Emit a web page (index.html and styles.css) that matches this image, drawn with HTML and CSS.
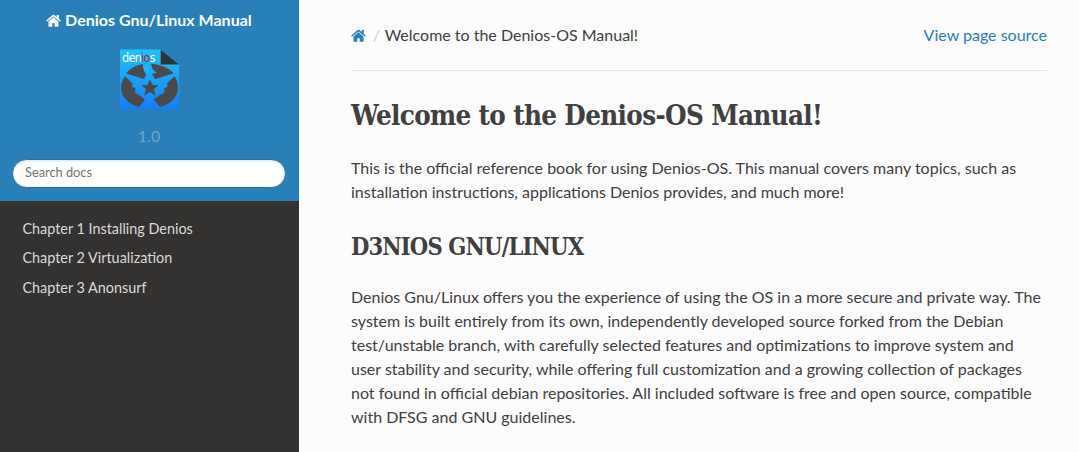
FILE: index.html
```html
<!DOCTYPE html>
<html lang="en">
<head>
<meta charset="utf-8">
<title>Welcome to the Denios-OS Manual!</title>
<link rel="stylesheet" href="styles.css">
</head>
<body>
<nav class="side">
  <div class="search-area">
    <a class="project"><svg class="home" viewBox="0 0 16 14"><path d="M8 3.6 2.6 8v5.1c0 .3.2.5.5.5h3.6V10h2.6v3.6h3.6c.3 0 .5-.2.5-.5V8zM15.8 7l-2-1.7V1.4c0-.2-.1-.3-.3-.3h-1.8c-.2 0-.3.1-.3.3v1.8L9 1.2c-.6-.5-1.4-.5-2 0L.2 7c-.2.1-.2.3 0 .4l.6.7c.1.2.3.2.4 0L8 2.6l6.8 5.5c.1.2.3.2.4 0l.6-.7c.2-.1.2-.3 0-.4z"/></svg> Denios Gnu/Linux Manual</a>
    <svg class="logo" viewBox="0 0 60 61">
      <defs><linearGradient id="sky" x2="0" y2="1"><stop stop-color="#1fc3f8"/><stop offset="1" stop-color="#167df5"/></linearGradient></defs>
      <path fill="url(#sky)" d="M0 .5h40.500l18.500 15v45H0z"/>
      <path fill="#2f3236" d="M40.700.7v14.800h18.300z"/>
      <g fill="#4a4a4a">
        <path d="M6 24.500Q13 16 23 15l1 7 2 3.500-2 4.500z"/>
        <path d="M31 14.800Q46 16 53.500 24.300L35 30.200l-3-5.500 4.800-.6-4.300-4.100z"/>
        <path d="M5 27.200l7.500 7.300-.5 3.200 3.500 1.500-.7 4.300 4.200 2.300 5.800 4.700-5.500 7.500C10 55.500 1 49 1 39 1 34 2.600 31 5 27.200z"/>
        <path d="M54.500 27.200l-7.500 7.300.5 3.200-3.500 1.500.7 4.300-4.200 2.300-7 4.700 6.500 7.500C49.500 55.500 58 49 58 39c0-5-1.100-8-3.500-11.800z"/>
        <path d="M30 30.500l2.500 5.500 6.100.2-4.800 4 1.900 6.300-5.700-3.600-5.800 3.600 1.800-6.300-4.900-4 6.300-.2z"/>
      </g>
      <path fill="#2ab5f7" d="M24.300 22l-1.800-6.600 2.200 1.800.4-2.200 2 2.700.8-2.200 1.300 3.600-.6 5z"/>
      <text x="2" y="12.500" class="logo-text">den<tspan class="logo-accent">io</tspan>s</text>
    </svg>
    <div class="version">1.0</div>
    <input class="search" placeholder="Search docs">
  </div>
  <ul class="toc"><li>Chapter 1 Installing Denios</li><li>Chapter 2 Virtualization</li><li>Chapter 3 Anonsurf</li></ul>
</nav>
<main class="content">
  <div class="crumbs">
    <svg class="home" viewBox="0 0 16 14"><path d="M8 3.6 2.6 8v5.1c0 .3.2.5.5.5h3.6V10h2.6v3.6h3.6c.3 0 .5-.2.5-.5V8zM15.8 7l-2-1.700V1.400c0-.2-.1-.3-.3-.3h-1.800c-.2 0-.3.1-.3.3v1.800L9 1.200c-.6-.5-1.400-.5-2 0L.2 7c-.2.1-.2.3 0 .4l.6.7c.1.2.3.2.4 0L8 2.600l6.800 5.500c.1.2.3.2.4 0l.6-.7c.2-.1.2-.3 0-.4z"/></svg>
    <span class="slash">/</span><span>Welcome to the Denios-OS Manual!</span><a class="source">View page source</a>
  </div>
  <h1>Welcome to the Denios-OS Manual!</h1>
  <p>This is the official reference book for using Denios-OS. This manual covers many topics, such as<br>installation instructions, applications Denios provides, and much more!</p>
  <h2>D3NIOS GNU/LINUX</h2>
  <p>Denios Gnu/Linux offers you the experience of using the OS in a more secure and private way. The<br>system is built entirely from its own, independently developed source forked from the Debian<br>test/unstable branch, with carefully selected features and optimizations to improve system and<br>user stability and security, while offering full customization and a growing collection of packages<br>not found in official debian repositories. All included software is free and open source, compatible<br>with DFSG and GNU guidelines.</p>
</main>
</body>
</html>
```
FILE: styles.css
```css
* { box-sizing: border-box; }
body { margin: 0; display: flex; height: 452px; overflow: hidden; font: 16px/24px Lato, sans-serif; color: #404040; background: #fcfcfc; }
.side { width: 299px; flex: none; background: #343131; }
.search-area { height: 201px; padding: 8px 13px 0 12px; background: #2980b9; display: flex; flex-direction: column; align-items: center; }
.project { color: #fcfcfc; font-weight: 700; font-size: 16px; white-space: nowrap; }
.home { width: 15px; height: 13px; fill: currentColor; vertical-align: -1px; }
.logo { width: 60px; height: 61px; margin-top: 17px; margin-left: 1px; overflow: visible; }
.logo-text { font: 14px/1 "DejaVu Sans Condensed", "DejaVu Sans", sans-serif; font-stretch: condensed; font-size: 12.5px; letter-spacing: -.7px; fill: #fff; }
.logo-accent { fill: #b3202c; }
.version { margin-top: 14px; color: rgba(255,255,255,.3); }
.search { width: 274px; height: 29px; margin-top: 10.600px; padding: 5px 12px 7px; border: 1px solid #2472a4; border-radius: 50px; font: 12.8px Lato, sans-serif; background: #fff; box-shadow: inset 0 1px 3px #ddd; }
.search::placeholder { color: #757575; }
.toc { list-style: none; margin: 0; padding: 13px 22.4px; font-size: 14.4px; line-height: 29.3px; color: #d9d9d9; }
.content { width: 748px; padding: 23px 0 0 52px; white-space: nowrap; }
.crumbs { display: flex; align-items: center; height: 48px; padding-bottom: 23px; border-bottom: 1px solid #e1e4e5; }
.crumbs .home { color: #2980b9; margin-left: -.5px; }
.slash { margin: 0 6px 0 7.2px; width: 6px; color: #ccc; }
.source { margin-left: auto; color: #2980b9; }
h1, h2 { margin: 0; font-family: "Roboto Slab", "DejaVu Serif Condensed", "DejaVu Serif", serif; font-stretch: condensed; font-weight: 700; }
h1 { margin-top: 24px; font-size: 27.5px; line-height: 40px; letter-spacing: -.65px; }
h1 + p { margin-top: 21px; }
h2 { margin-top: 25px; font-size: 23.5px; line-height: 36px; letter-spacing: -.85px; }
p { margin: 20px 0 0; }
```
